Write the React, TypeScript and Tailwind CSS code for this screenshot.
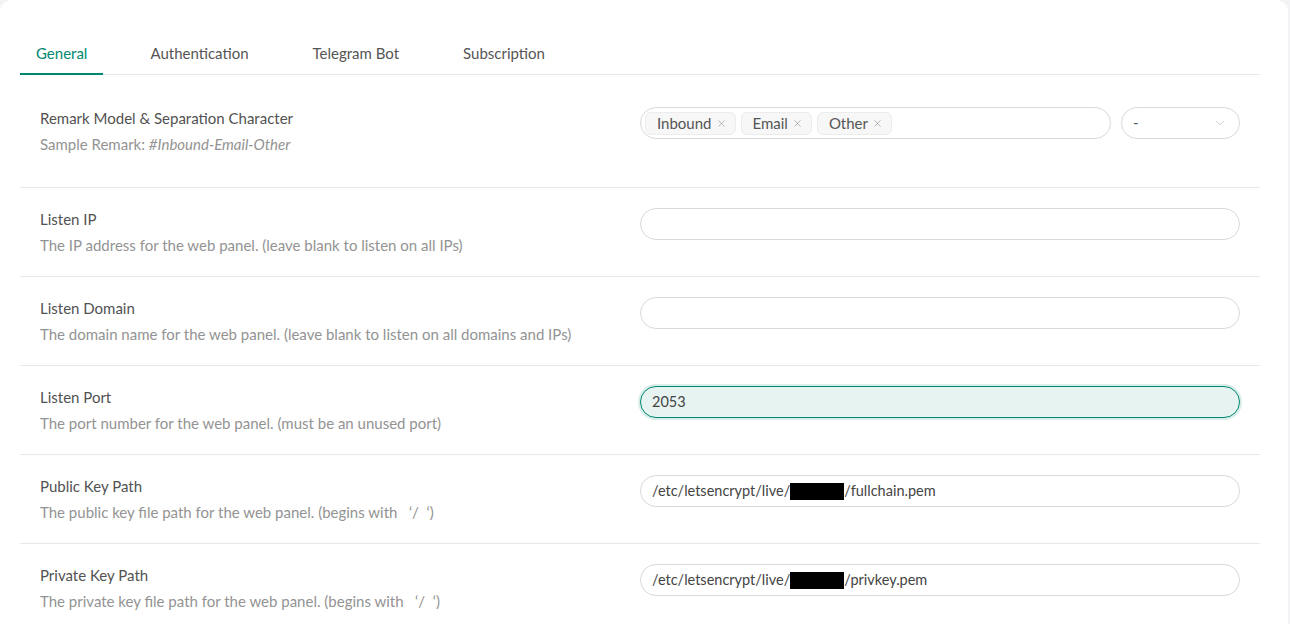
import { ChevronDown, X } from "lucide-react"

const rows = [
  {
    title: "Listen IP",
    desc: "The IP address for the web panel. (leave blank to listen on all IPs)",
    value: "",
  },
  {
    title: "Listen Domain",
    desc: "The domain name for the web panel. (leave blank to listen on all domains and IPs)",
    value: "",
  },
  {
    title: "Listen Port",
    desc: "The port number for the web panel. (must be an unused port)",
    value: "2053",
    focused: true,
  },
  {
    title: "Public Key Path",
    desc: "The public key file path for the web panel. (begins with \u00a0\u00a0\u2018/\u00a0\u00a0\u2018)",
    path: "fullchain.pem",
  },
  {
    title: "Private Key Path",
    desc: "The private key file path for the web panel. (begins with \u00a0\u00a0\u2018/\u00a0\u00a0\u2018)",
    path: "privkey.pem",
  },
]

function Tag({ label }: { label: string }) {
  return (
    <span className="inline-flex items-center h-[23px] mt-[1px] pl-[11px] pr-[8px] gap-[4px] rounded-md border border-[#ececec] bg-[#f7f7f7] text-[15px] text-[#555]">
      {label}
      <X className="w-[11px] h-[11px] text-[#999]" strokeWidth={1.5} />
    </span>
  )
}

export default function App() {
  return (
    <div className="min-h-screen bg-[#f3f3f5] font-['Lato','Noto_Sans',sans-serif]">
      <div className="bg-white rounded-t-xl min-h-[624px] w-[1288px] pl-5 pr-[28px] pt-[42px]">
        {/* tabs */}
        <div className="flex border-b border-[#e8e8e8] text-[15px] text-[#555]">
          <div className="px-4 pb-[8px] border-b-2 border-[#008771] text-[#008771] -mb-px">General</div>
          <div className="ml-[31px] px-4 pb-[8px]">Authentication</div>
          <div className="ml-[32px] px-4 pb-[8px]">Telegram Bot</div>
          <div className="ml-[32px] px-4 pb-[8px]">Subscription</div>
        </div>

        <div className="flex pt-[32px] pb-[32px] border-b border-[#e8e8e8]">
          <div className="w-1/2 px-5">
            <div className="text-[15px] text-[#525252] leading-[22px]">Remark Model &amp; Separation Character</div>
            <div className="text-[15px] text-[#939393] leading-[22px] mt-[4px]">
              Sample Remark: <i>#Inbound-Email-Other</i>
            </div>
          </div>
          <div className="w-1/2 pr-5 flex gap-[10px]">
            <div className="flex-1 h-[32px] rounded-full border border-[#d9d9d9] flex items-center gap-[5px] px-[4px]">
              <Tag label="Inbound" />
              <Tag label="Email" />
              <Tag label="Other" />
            </div>
            <div className="w-[119px] h-[32px] rounded-full border border-[#d9d9d9] flex items-center justify-between pl-[11px] pr-[12px] text-[15px] text-[#555]">
              <span>-</span>
              <ChevronDown className="w-[14px] h-[14px] text-[#bbb]" strokeWidth={1.25} />
            </div>
          </div>
        </div>

        {rows.map((r) => (
          <div key={r.title} className="flex h-[89px] items-center border-b border-[#e8e8e8]">
            <div className="w-1/2 px-5">
              <div className="text-[15px] text-[#525252] leading-[22px]">{r.title}</div>
              <div className="text-[15px] text-[#939393] leading-[22px] mt-[4px] whitespace-pre">{r.desc}</div>
            </div>
            <div className="w-1/2 pr-5 -mt-[15px]">
              <div
                className={
                  r.focused
                    ? "h-[32px] rounded-full border border-[#008771] bg-[#e7f3f1] shadow-[0_0_0_2px_rgba(0,135,113,0.15)] flex items-center px-[11px] text-[14.5px] text-[#444]"
                    : "h-[32px] rounded-full border border-[#d9d9d9] flex items-center px-[11px] text-[14.5px] text-[#444]"
                }
              >
                {r.path ? (
                  <>
                    /etc/letsencrypt/live/
                    <span className="inline-block w-[54px] h-[17px] bg-black" />
                    /{r.path}
                  </>
                ) : (
                  r.value
                )}
              </div>
            </div>
          </div>
        ))}
      </div>
    </div>
  )
}
